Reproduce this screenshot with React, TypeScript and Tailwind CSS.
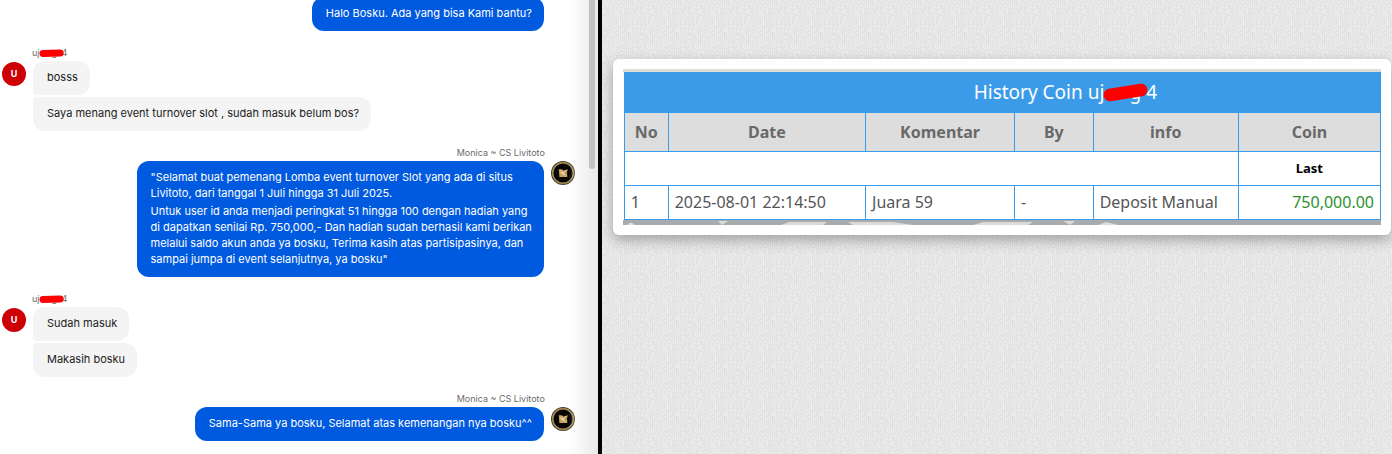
import React from "react";

interface ChatGroup {
  from: "user" | "agent";
  name?: string;
  bubbles: string[][];
}

const CHAT: ChatGroup[] = [
  { from: "user", bubbles: [["bosss"], ["Saya menang event turnover slot , sudah masuk belum bos?"]] },
  {
    from: "agent",
    name: "Monica ~ CS Livitoto",
    bubbles: [
      [
        "\"Selamat buat pemenang Lomba event turnover Slot yang ada di situs\nLivitoto, dari tanggal 1 Juli hingga 31 Juli 2025.",
        "Untuk user id anda menjadi peringkat 51 hingga 100 dengan hadiah yang\ndi dapatkan senilai Rp. 750,000,- Dan hadiah sudah berhasil kami berikan\nmelalui saldo akun anda ya bosku, Terima kasih atas partisipasinya, dan\nsampai jumpa di event selanjutnya, ya bosku\"",
      ],
    ],
  },
  { from: "user", bubbles: [["Sudah masuk"], ["Makasih bosku"]] },
  {
    from: "agent",
    name: "Monica ~ CS Livitoto",
    bubbles: [["Sama-Sama ya bosku, Selamat atas kemenangan nya bosku^^"]],
  },
];

const COLUMNS = [
  { label: "No", width: "w-[5.8%]" },
  { label: "Date", width: "w-[26.1%]" },
  { label: "Komentar", width: "w-[19.7%]" },
  { label: "By", width: "w-[10.4%]" },
  { label: "info", width: "w-[19.2%]" },
  { label: "Coin", width: "w-[18.8%]" },
];

// Linen texture: woven light and dark pixels on a repeating tile
const TILE = 48;
const LINEN = Array.from({ length: TILE * TILE }, (_, i) => {
  const x = i % TILE;
  const y = Math.floor(i / TILE);
  const n = Math.abs(Math.sin(x * 12.9898 + y * 78.233) * 43758.5453) % 1;
  const weave = (x + y * 2) % 4 === 0 ? 12 : 0;
  const grey = Math.round(240 - n * 14 - weave);
  return { x, y, fill: `rgb(${grey},${grey},${grey})` };
});

function Linen() {
  return (
    <svg className="absolute inset-0 -z-10 h-full w-full" aria-hidden="true">
      <defs>
        <pattern id="linen" width={TILE} height={TILE} patternUnits="userSpaceOnUse">
          <g shapeRendering="crispEdges">
            {LINEN.map((p, i) => (
              <rect key={i} x={p.x} y={p.y} width="1" height="1" fill={p.fill} />
            ))}
          </g>
        </pattern>
      </defs>
      <rect width="100%" height="100%" fill="url(#linen)" />
    </svg>
  );
}

/** User name with the middle part struck out in red */
function MaskedName({ large }: { large?: boolean }) {
  return (
    <span className="inline-flex items-center">
      uj
      <span className={large ? "relative w-[42px] pl-5" : "relative w-[22px] pl-3"}>
        g
        <svg
          className="absolute inset-0 h-full w-full overflow-visible"
          viewBox={large ? "0 0 43 26" : "0 0 22 12"}
          aria-hidden="true"
        >
          {large ? (
            <path d="M6 16 L38 11" stroke="#fe0000" strokeWidth="13" strokeLinecap="round" />
          ) : (
            <path d="M3 6.5 L20 6" stroke="#fe0000" strokeWidth="7" strokeLinecap="round" />
          )}
        </svg>
      </span>
      4
    </span>
  );
}

function AgentAvatar() {
  return (
    <svg className="size-6 shrink-0" viewBox="0 0 24 24" aria-hidden="true">
      <circle cx="12" cy="12" r="12" fill="#4a4130" />
      <circle cx="12" cy="12" r="10.3" fill="#080705" stroke="#a98f55" strokeWidth="1.5" />
      <path d="M7.8 8.2h2.8l2 1.2 4.2-1.2-.8 3 .3 4.8H8.4z" fill="#c9a062" />
      <path d="M9 9.5l3 2 4-3-2 4 .5 2-4-1.5z" fill="#ecd3a0" />
      <path d="M13.5 13l2.5-3" stroke="#8a6a38" strokeWidth="1" />
    </svg>
  );
}

function Group({ group }: { group: ChatGroup }) {
  const agent = group.from === "agent";
  return (
    <div className={agent ? "flex flex-col items-end gap-0.5" : "flex flex-col items-start gap-0.5"}>
      <div className={agent ? "mr-[30px] h-3 text-[9px] leading-3 text-[#6b6b6b]" : "ml-[30px] h-3 text-[9px] leading-3 text-[#6b6b6b]"}>
        {agent ? group.name : <MaskedName />}
      </div>
      <div className={agent ? "flex flex-row-reverse gap-[7px]" : "flex gap-[7px]"}>
        {agent ? (
          <AgentAvatar />
        ) : (
          <div className="mt-px flex size-6 shrink-0 items-center justify-center rounded-full bg-[#cc0005] text-[9px] font-bold text-white">
            U
          </div>
        )}
        <div className={agent ? "flex flex-col items-end gap-0.5" : "flex flex-col items-start gap-0.5"}>
          {group.bubbles.map((paragraphs, i) => (
            <div
              key={i}
              className={
                agent
                  ? "flex flex-col gap-0.5 rounded-xl bg-[#005ae0] pt-2 pr-3 pb-2.5 pl-3.5 text-[11px] leading-4 whitespace-pre-line text-white"
                  : i === 0
                    ? "rounded-xl rounded-bl-sm bg-[#f4f4f4] pt-2 pr-3 pb-2.5 pl-3.5 text-[11px] leading-4 text-[#202020]"
                    : "rounded-xl rounded-tl-sm bg-[#f4f4f4] pt-2 pr-3 pb-2.5 pl-3.5 text-[11px] leading-4 text-[#202020]"
              }
            >
              {paragraphs.map(text => (
                <p key={text}>{text}</p>
              ))}
            </div>
          ))}
        </div>
      </div>
    </div>
  );
}

function HistoryTable() {
  return (
    <table className="w-full table-fixed border-collapse bg-white font-['Noto_Sans',sans-serif] text-[16px] leading-5 text-[#555555]">
      <caption className="h-10 bg-[#3b9be9] text-[19px] leading-10 text-white">
        <span className="ml-[126px]">
          History Coin <MaskedName large />
        </span>
      </caption>
      <thead>
        <tr className="h-[39px] bg-[#dddddd] text-[#696969]">
          {COLUMNS.map(col => (
            <th key={col.label} className={`border border-[#3b9be9] px-0 font-bold ${col.width}`}>
              {col.label}
            </th>
          ))}
        </tr>
      </thead>
      <tbody>
        <tr className="h-[34px] text-[13px] text-black">
          <td colSpan={5} className="border border-[#3b9be9]" />
          <th className="border border-[#3b9be9] pb-0.5 font-bold">Last</th>
        </tr>
        <tr className="h-[34px]">
          <td className="border border-[#3b9be9] px-1.5 pb-0.5">1</td>
          <td className="border border-[#3b9be9] px-1.5 pb-0.5">2025-08-01 22:14:50</td>
          <td className="border border-[#3b9be9] px-1.5 pb-0.5">Juara 59</td>
          <td className="border border-[#3b9be9] px-1.5 pb-0.5">-</td>
          <td className="border border-[#3b9be9] px-1.5 pb-0.5">Deposit Manual</td>
          <td className="border border-[#3b9be9] px-1.5 pb-0.5 text-right text-[#2a922f]">750,000.00</td>
        </tr>
      </tbody>
    </table>
  );
}

export default function App() {
  return (
    <div className="flex h-screen overflow-hidden bg-white font-[Inter,sans-serif]">
      {/* Chat */}
      <section className="flex w-[42.95%] shrink-0 overflow-hidden">
        <div className="flex min-w-0 flex-1 flex-col gap-4 pl-0.5">
          <div className="-mt-[3px] mr-[45px] self-end rounded-xl bg-[#005ae0] pt-2 pr-3 pb-2.5 pl-3.5 text-[11px] leading-4 text-white">
            Halo Bosku. Ada yang bisa Kami bantu?
          </div>
          {CHAT.map((group, i) => (
            <div key={i} className="pr-3.5">
              <Group group={group} />
            </div>
          ))}
        </div>
        <div className="-ml-5 flex w-[29px] shrink-0 justify-end bg-linear-to-r from-transparent to-[#e9e9e9] pr-[3px]">
          <div className="h-[169px] w-[6px] rounded-b-full bg-[#c2c3c5]" />
        </div>
      </section>

      <div className="w-1 shrink-0 bg-black" />

      {/* Coin history */}
      <main className="relative isolate min-w-0 flex-1 pt-[59px] pr-px pl-[11px]">
        <Linen />
        <div className="rounded-md bg-white p-2.5 shadow-[0_5px_14px_rgba(0,0,0,0.3)]">
          <div className="border-t-[3px] border-[#deded5] pl-px">
            <HistoryTable />
          </div>
          <svg className="block h-[5px] w-full" viewBox="0 0 758 5" preserveAspectRatio="none" aria-hidden="true">
            <rect width="758" height="5" fill="#a6abb0" />
            <path d="M4 5q4-5 8 0zM95 1h10l-6 4zM158 5l8-3h38l-4 3zM225 2h45l20 3h-60zM350 5l10-3h50l-5 3zM440 1h12l-5 4zM475 5l8-3 12 3z" fill="#dadbd8" />
          </svg>
        </div>
      </main>
    </div>
  );
}
